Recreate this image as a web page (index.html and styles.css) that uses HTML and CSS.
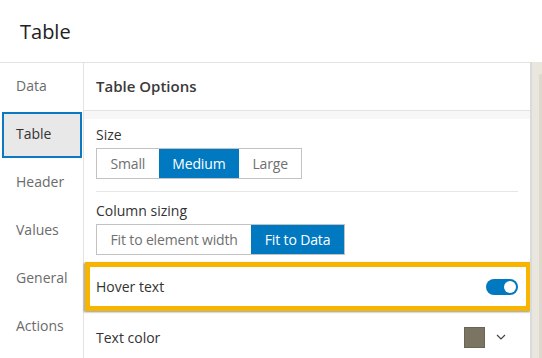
FILE: index.html
```html
<!DOCTYPE html>
<html>
<head>
<meta charset="utf-8">
<link rel="stylesheet" href="styles.css">
</head>
<body>
<div class="app">
  <header class="title">Table</header>
  <div class="body">
    <nav class="nav">
      <div class="nav-item">Data</div>
      <div class="nav-item active">Table</div>
      <div class="nav-item">Header</div>
      <div class="nav-item">Values</div>
      <div class="nav-item">General</div>
      <div class="nav-item">Actions</div>
    </nav>
    <main class="panel">
      <div class="panel-head">Table Options</div>
      <div class="panel-band"></div>
      <div class="panel-content">
        <div class="label">Size</div>
        <div class="seg">
          <span class="seg-item">Small</span>
          <span class="seg-item on">Medium</span>
          <span class="seg-item">Large</span>
        </div>
        <div class="sep"></div>
        <div class="label label-gap">Column sizing</div>
        <div class="seg">
          <span class="seg-item">Fit to element width</span>
          <span class="seg-item on">Fit to Data</span>
        </div>
        <div class="row highlight">
          <span>Hover text</span>
          <span class="toggle"><span class="knob"></span></span>
        </div>
        <div class="row plain">
          <span>Text color</span>
          <span class="color-pick">
            <span class="swatch"></span>
            <svg class="chev" width="10" height="6" viewBox="0 0 10 6"><path d="M1 1 L5 5 L9 1" fill="none" stroke="#444" stroke-width="1.2"/></svg>
          </span>
        </div>
      </div>
    </main>
    <div class="scroll"><div class="thumb"></div></div>
  </div>
</div>
</body>
</html>
```

FILE: styles.css
```css
body {
  margin: 0;
  background: #fff;
  font-family: "Open Sans", "Liberation Sans", sans-serif;
}
.app {
  width: 542px;
  height: 358px;
  overflow: hidden;
  display: flex;
  flex-direction: column;
}
.title {
  height: 62px;
  flex-shrink: 0;
  display: flex;
  align-items: center;
  padding-left: 20px;
  font-size: 20px;
  color: #222;
}
.body {
  flex: 1;
  display: flex;
  min-height: 0;
}
.nav {
  width: 84px;
  box-sizing: border-box;
  flex-shrink: 0;
  border-top: 1px solid #e3e3e3;
  border-right: 1px solid #e3e3e3;
}
.nav-item {
  height: 48px;
  box-sizing: border-box;
  display: flex;
  align-items: center;
  padding: 0 0 3px 16px;
  font-size: 14px;
  color: #6b6b6b;
}
.nav-item.active {
  height: 46px;
  margin: 1px 1px 1px 2px;
  padding-left: 12px;
  border: 2px solid #0b79bf;
  background: #e8e8e8;
  color: #333;
}
.panel {
  flex: 1;
  min-width: 0;
  border-top: 1px solid #e3e3e3;
}
.panel-head {
  box-sizing: border-box;
  height: 48px;
  border-bottom: 1px solid #e3e3e3;
  display: flex;
  align-items: center;
  padding: 0 0 1px 12px;
  font-size: 15px;
  font-weight: 600;
  color: #3a3a3a;
}
.panel-band {
  height: 8px;
  background: #f7f7f7;
}
.panel-content {
  padding: 6px 12px 0 12px;
}
.label {
  font-size: 14px;
  line-height: 20px;
  color: #333;
  margin-bottom: 3px;
}
.label-gap {
  margin-top: 9px;
}
.seg {
  display: inline-flex;
  height: 31px;
  box-sizing: border-box;
  border: 1px solid #c2c2c2;
  vertical-align: top;
}
.seg-item {
  display: flex;
  align-items: center;
  padding: 0 13.5px;
  font-size: 14px;
  letter-spacing: -0.15px;
  color: #707070;
}
.seg-item.on {
  background: #0079c1;
  color: #fff;
}
.sep {
  height: 1px;
  background: #e6e6e6;
  margin-top: 12px;
}
.row {
  display: flex;
  align-items: center;
  justify-content: space-between;
  font-size: 14px;
  color: #333;
}
.highlight {
  margin: 7px -13px 0 -11px;
  height: 39px;
  border: 5px solid #f7b500;
  padding: 0 8px 0 6px;
  box-shadow: -1px 1px 2px rgba(0, 0, 0, 0.45);
}
.plain {
  margin-top: 2px;
  height: 48px;
  padding-right: 12px;
}
.toggle {
  width: 32px;
  height: 16px;
  border-radius: 8px;
  background: #0079c1;
  display: flex;
  align-items: center;
  justify-content: flex-end;
}
.knob {
  width: 12px;
  height: 12px;
  border-radius: 50%;
  background: #fff;
  margin-right: 2px;
}
.color-pick {
  display: flex;
  align-items: center;
}
.swatch {
  width: 19px;
  height: 19px;
  background: #7b7463;
  border: 1px solid #6a6454;
}
.chev {
  margin-left: 11px;
}
.scroll {
  width: 12px;
  flex-shrink: 0;
  box-sizing: border-box;
  border-left: 2px solid #dadada;
  background: #e9e6de;
  display: flex;
  flex-direction: column;
}
.thumb {
  flex: 1;
  margin: 12px 0 0 7px;
  background: #ddd9ce;
  border-radius: 2px 0 0 0;
}
```
